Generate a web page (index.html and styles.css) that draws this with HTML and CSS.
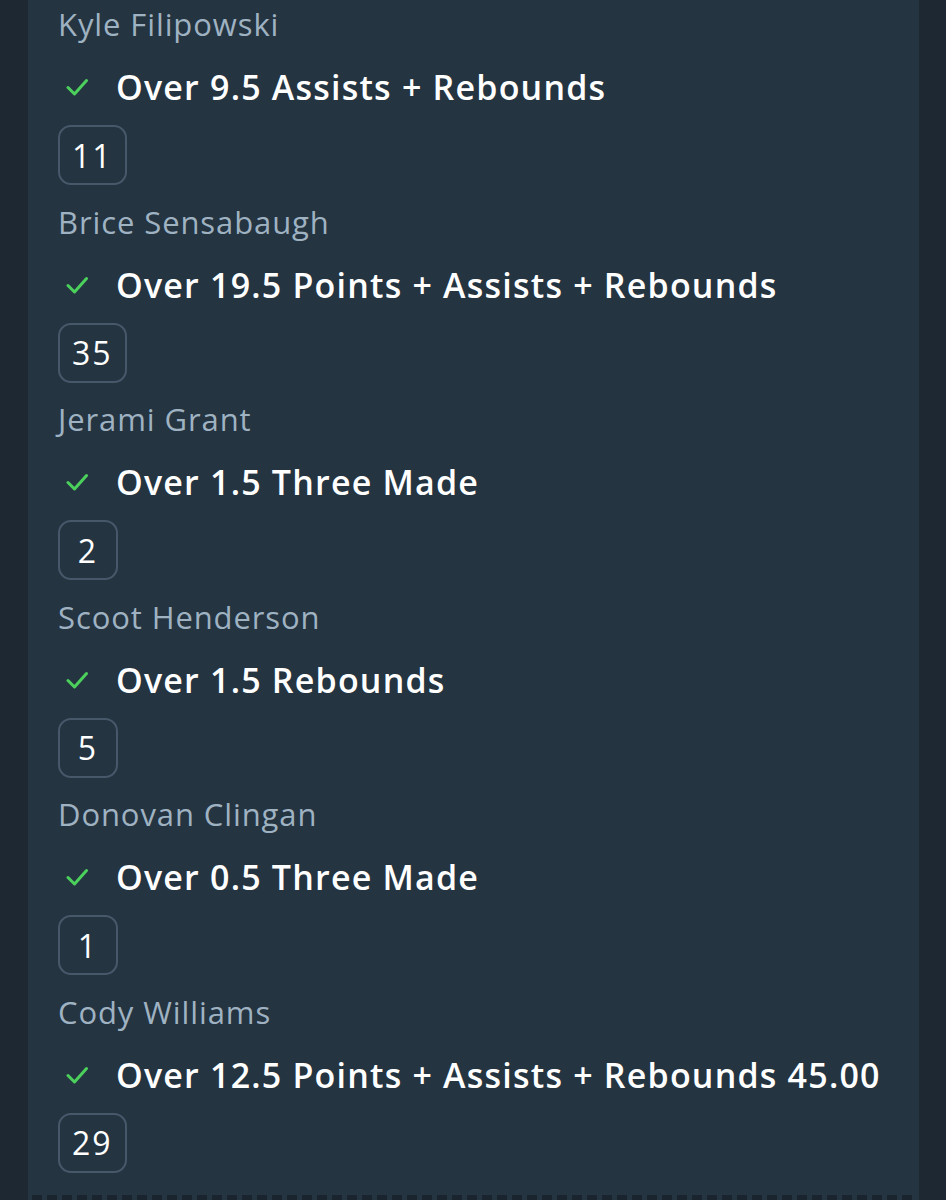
FILE: index.html
```html
<!DOCTYPE html>
<html>
<head>
<meta charset="utf-8">
<link rel="stylesheet" href="styles.css">
</head>
<body>
<div class="page">
  <div class="panel">
    <ul class="legs">
      <li class="leg">
        <div class="player">Kyle Filipowski</div>
        <div class="pick"><svg class="check" viewBox="0 0 22 18"><path d="M2 9.5 L8.5 16 L20.5 2.5"/></svg><span>Over 9.5 Assists + Rebounds</span></div>
        <div class="result">11</div>
      </li>
      <li class="leg">
        <div class="player">Brice Sensabaugh</div>
        <div class="pick"><svg class="check" viewBox="0 0 22 18"><path d="M2 9.5 L8.5 16 L20.5 2.5"/></svg><span>Over 19.5 Points + Assists + Rebounds</span></div>
        <div class="result">35</div>
      </li>
      <li class="leg">
        <div class="player">Jerami Grant</div>
        <div class="pick"><svg class="check" viewBox="0 0 22 18"><path d="M2 9.5 L8.5 16 L20.5 2.5"/></svg><span>Over 1.5 Three Made</span></div>
        <div class="result">2</div>
      </li>
      <li class="leg">
        <div class="player">Scoot Henderson</div>
        <div class="pick"><svg class="check" viewBox="0 0 22 18"><path d="M2 9.5 L8.5 16 L20.5 2.5"/></svg><span>Over 1.5 Rebounds</span></div>
        <div class="result">5</div>
      </li>
      <li class="leg">
        <div class="player">Donovan Clingan</div>
        <div class="pick"><svg class="check" viewBox="0 0 22 18"><path d="M2 9.5 L8.5 16 L20.5 2.5"/></svg><span>Over 0.5 Three Made</span></div>
        <div class="result">1</div>
      </li>
      <li class="leg">
        <div class="player">Cody Williams</div>
        <div class="pick"><svg class="check" viewBox="0 0 22 18"><path d="M2 9.5 L8.5 16 L20.5 2.5"/></svg><span>Over 12.5 Points + Assists + Rebounds 45.00</span></div>
        <div class="result">29</div>
      </li>
    </ul>
    <div class="perforation"></div>
  </div>
</div>
</body>
</html>
```

FILE: styles.css
```css
html, body {
  margin: 0;
  padding: 0;
  background: #1d2832;
  font-family: "Open Sans", Lato, sans-serif;
}
.page {
  height: 1200px;
  overflow: hidden;
  padding-left: 28px;
  width: 891px;
}
.panel {
  background: #243441;
  height: 1200px;
  display: flex;
  flex-direction: column;
  justify-content: space-between;
}
.legs {
  list-style: none;
  margin: 0;
  padding: 4px 0 0 30px;
}
.leg {
  display: flex;
  flex-direction: column;
  align-items: flex-start;
  padding-bottom: 16.5px;
}
.player {
  height: 40px;
  line-height: 40px;
  font-size: 31px;
  color: #9fb2c2;
  letter-spacing: 0.9px;
}
.pick {
  margin-top: 19px;
  height: 48px;
  display: flex;
  align-items: center;
  color: #ffffff;
  font-size: 34px;
  font-weight: 600;
  letter-spacing: 1.2px;
}
.check {
  width: 22px;
  height: 18px;
  margin-left: 8px;
  margin-right: 28px;
  fill: none;
  stroke: #4cd05c;
  stroke-width: 3;
  stroke-linecap: round;
  stroke-linejoin: round;
}
.result {
  margin-top: 14px;
  box-sizing: border-box;
  height: 60px;
  min-width: 60px;
  padding: 0 12px;
  border: 2px solid #47586a;
  border-radius: 13px;
  display: flex;
  align-items: center;
  justify-content: center;
  color: #ffffff;
  font-size: 32px;
  letter-spacing: 2px;
}
.perforation {
  height: 5px;
  margin: 0 4px;
  background: repeating-linear-gradient(90deg, #1a242e 0 10px, transparent 10px 15px);
}
```
